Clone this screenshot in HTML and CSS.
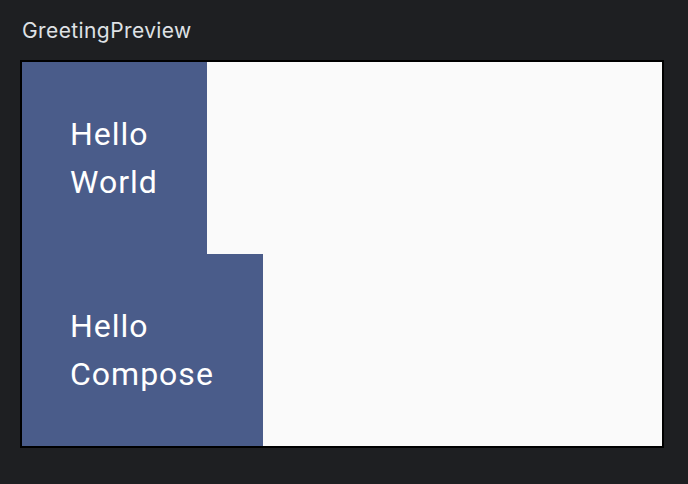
FILE: index.html
```html
<!DOCTYPE html>
<html>
<head>
<meta charset="utf-8">
<link rel="stylesheet" href="styles.css">
</head>
<body>
<div class="title">GreetingPreview</div>
<div class="frame">
  <div class="greeting">
    <span class="line">Hello</span>
    <span class="line">World</span>
  </div>
  <div class="greeting">
    <span class="line">Hello</span>
    <span class="line">Compose</span>
  </div>
</div>
</body>
</html>
```
FILE: styles.css
```css
html, body {
  margin: 0;
  padding: 0;
  background: #1e1f22;
  width: 688px;
  height: 484px;
  overflow: hidden;
}
.title {
  font-family: Inter, "Noto Sans", sans-serif;
  font-size: 21px;
  line-height: 22px;
  letter-spacing: 0.4px;
  color: #dfe1e5;
  padding: 20px 0 0 22px;
  height: 22px;
}
.frame {
  margin: 18px 0 0 20px;
  width: 640px;
  height: 384px;
  border: 2px solid #000;
  background: #fafafa;
  display: flex;
  flex-direction: column;
  align-items: flex-start;
}
.greeting {
  background: #4a5c8a;
  padding: 48px 49px 48px 48px;
  display: flex;
  flex-direction: column;
  font-family: Roboto, sans-serif;
  font-size: 32px;
  line-height: 48px;
  letter-spacing: 1px;
  color: #ffffff;
}
.line {
  display: block;
  white-space: nowrap;
}
```
